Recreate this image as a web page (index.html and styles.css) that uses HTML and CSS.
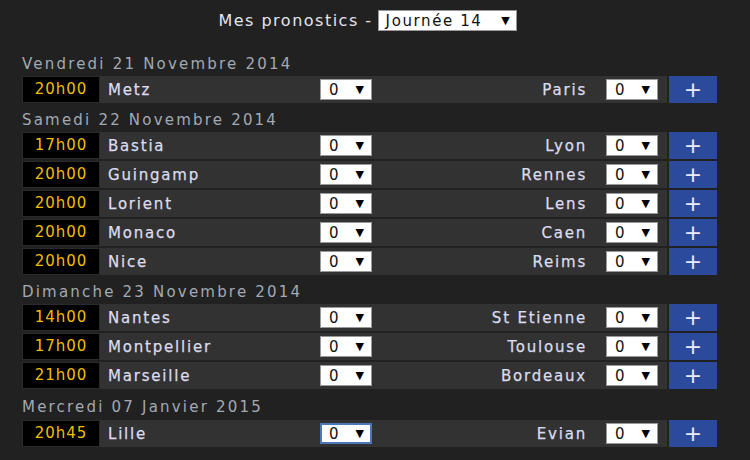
FILE: index.html
```html
<!DOCTYPE html>
<html lang="fr">
<head>
    <meta charset="UTF-8">
    <title>Mes pronostics</title>
    <link rel="stylesheet" href="styles.css">
</head>
<body>
  <div class="top">
    <span class="top-label">Mes pronostics -</span>
    <span class="journee">Journée 14<span class="arrow">&#9660;</span></span>
  </div>

  <div class="games">
    <div class="day">Vendredi 21 Novembre 2014</div>
    <div class="match">
      <div class="match-body">
        <span class="time">20h00</span><span class="home">Metz</span>
        <span class="pick">0<span class="arrow">&#9660;</span></span>
        <span class="away">Paris</span>
        <span class="pick">0<span class="arrow">&#9660;</span></span>
      </div>
      <button class="more">+</button>
    </div>

    <div class="day">Samedi 22 Novembre 2014</div>
    <div class="match">
      <div class="match-body">
        <span class="time">17h00</span><span class="home">Bastia</span>
        <span class="pick">0<span class="arrow">&#9660;</span></span>
        <span class="away">Lyon</span>
        <span class="pick">0<span class="arrow">&#9660;</span></span>
      </div>
      <button class="more">+</button>
    </div>
    <div class="match">
      <div class="match-body">
        <span class="time">20h00</span><span class="home">Guingamp</span>
        <span class="pick">0<span class="arrow">&#9660;</span></span>
        <span class="away">Rennes</span>
        <span class="pick">0<span class="arrow">&#9660;</span></span>
      </div>
      <button class="more">+</button>
    </div>
    <div class="match">
      <div class="match-body">
        <span class="time">20h00</span><span class="home">Lorient</span>
        <span class="pick">0<span class="arrow">&#9660;</span></span>
        <span class="away">Lens</span>
        <span class="pick">0<span class="arrow">&#9660;</span></span>
      </div>
      <button class="more">+</button>
    </div>
    <div class="match">
      <div class="match-body">
        <span class="time">20h00</span><span class="home">Monaco</span>
        <span class="pick">0<span class="arrow">&#9660;</span></span>
        <span class="away">Caen</span>
        <span class="pick">0<span class="arrow">&#9660;</span></span>
      </div>
      <button class="more">+</button>
    </div>
    <div class="match">
      <div class="match-body">
        <span class="time">20h00</span><span class="home">Nice</span>
        <span class="pick">0<span class="arrow">&#9660;</span></span>
        <span class="away">Reims</span>
        <span class="pick">0<span class="arrow">&#9660;</span></span>
      </div>
      <button class="more">+</button>
    </div>

    <div class="day">Dimanche 23 Novembre 2014</div>
    <div class="match">
      <div class="match-body">
        <span class="time">14h00</span><span class="home">Nantes</span>
        <span class="pick">0<span class="arrow">&#9660;</span></span>
        <span class="away">St Etienne</span>
        <span class="pick">0<span class="arrow">&#9660;</span></span>
      </div>
      <button class="more">+</button>
    </div>
    <div class="match">
      <div class="match-body">
        <span class="time">17h00</span><span class="home">Montpellier</span>
        <span class="pick">0<span class="arrow">&#9660;</span></span>
        <span class="away">Toulouse</span>
        <span class="pick">0<span class="arrow">&#9660;</span></span>
      </div>
      <button class="more">+</button>
    </div>
    <div class="match">
      <div class="match-body">
        <span class="time">21h00</span><span class="home">Marseille</span>
        <span class="pick">0<span class="arrow">&#9660;</span></span>
        <span class="away">Bordeaux</span>
        <span class="pick">0<span class="arrow">&#9660;</span></span>
      </div>
      <button class="more">+</button>
    </div>

    <div class="day last">Mercredi 07 Janvier 2015</div>
    <div class="match">
      <div class="match-body">
        <span class="time">20h45</span><span class="home">Lille</span>
        <span class="pick focus">0<span class="arrow">&#9660;</span></span>
        <span class="away">Evian</span>
        <span class="pick">0<span class="arrow">&#9660;</span></span>
      </div>
      <button class="more">+</button>
    </div>
  </div>
</body>
</html>
```

FILE: styles.css
```css
body {
    margin: 0;
    background-color: #212121;
    font-family: "DejaVu Sans", Verdana, sans-serif;
    font-size: 15px;
    overflow: hidden;
}
.top {
    display: flex;
    justify-content: center;
    align-items: center;
    padding-top: 10px;
    padding-right: 15px;
    margin-bottom: 18px;
}
.top-label {
    color: #e4e4ec;
    font-size: 16px;
    letter-spacing: 1.5px;
    margin-right: 5px;
}
.journee {
    display: flex;
    align-items: center;
    justify-content: space-between;
    box-sizing: border-box;
    width: 139px;
    height: 21px;
    padding: 0 6px 0 7px;
    background-color: #fff;
    border: 1px solid #999;
    color: #111;
    font-size: 15px;
    letter-spacing: 1.6px;
}
.arrow {
    font-size: 11px;
    letter-spacing: 0;
    color: #000;
}
.games {
    margin-left: 22px;
    width: 695px;
}
.day {
    height: 23px;
    padding-top: 4px;
    line-height: 23px;
    color: #a3a9b2;
    letter-spacing: 2.2px;
}
.day.last {
    padding-top: 5px;
    margin-bottom: 1px;
}
.match {
    display: flex;
    height: 27px;
    margin-bottom: 2px;
}
.match-body {
    flex: 1;
    display: flex;
    align-items: center;
    background-color: #323232;
    padding-right: 9px;
}
.time {
    box-sizing: border-box;
    width: 78px;
    height: 27px;
    line-height: 25px;
    text-align: center;
    background-color: #000;
    border: 1px solid #2a2a2a;
    color: #f0be00;
    letter-spacing: 1px;
}
.home {
    width: 212px;
    padding-left: 8px;
    color: #dcdcee;
    letter-spacing: 1.8px;
    -webkit-text-stroke: 0.25px #dcdcee;
}
.away {
    flex: 1;
    text-align: right;
    padding-right: 19px;
    color: #dcdcee;
    letter-spacing: 1.8px;
    -webkit-text-stroke: 0.25px #dcdcee;
}
.pick {
    display: flex;
    align-items: center;
    justify-content: space-between;
    box-sizing: border-box;
    width: 52px;
    height: 21px;
    padding: 0 7px 0 8px;
    background-color: #fff;
    border: 1px solid #999;
    color: #111;
}
.pick.focus {
    border: 2px solid #4d78b8;
    padding: 0 6px 0 7px;
}
.more {
    width: 48px;
    height: 27px;
    margin-left: 2px;
    padding: 0;
    border: none;
    background-color: #2c4a9b;
    color: #e8ecf6;
    font-family: "DejaVu Sans", sans-serif;
    font-size: 22px;
    line-height: 27px;
}
```
